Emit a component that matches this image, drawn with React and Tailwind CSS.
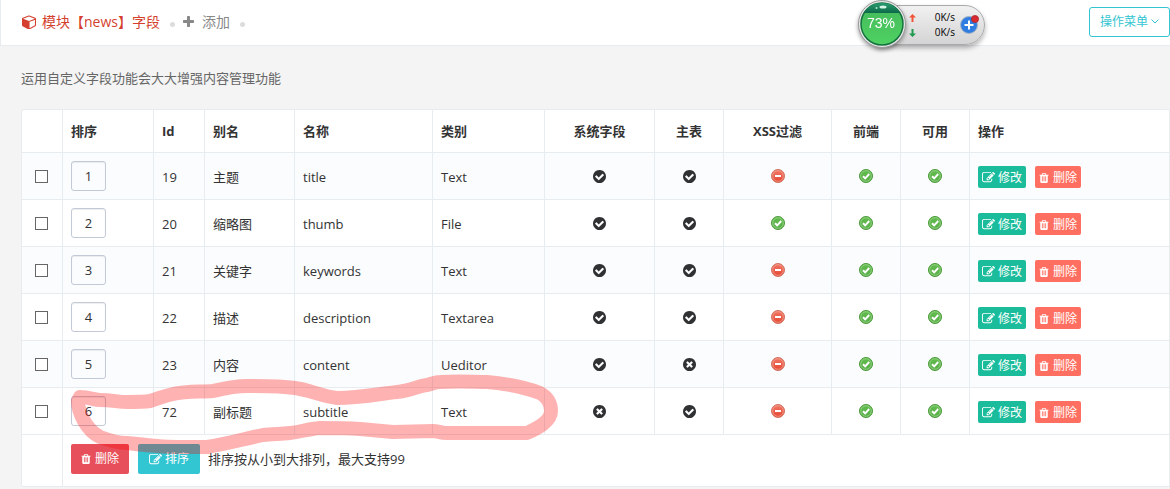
import React from 'react'

const fields = [
  { order: 1, id: 19, alias: '主题', name: 'title', type: 'Text', system: true, main: true, xss: false },
  { order: 2, id: 20, alias: '缩略图', name: 'thumb', type: 'File', system: true, main: true, xss: true },
  { order: 3, id: 21, alias: '关键字', name: 'keywords', type: 'Text', system: true, main: true, xss: false },
  { order: 4, id: 22, alias: '描述', name: 'description', type: 'Textarea', system: true, main: true, xss: false },
  { order: 5, id: 23, alias: '内容', name: 'content', type: 'Ueditor', system: true, main: false, xss: false },
  { order: 6, id: 72, alias: '副标题', name: 'subtitle', type: 'Text', system: false, main: true, xss: false },
]

const paths = {
  cube: 'M896 1629l640-349v-636l-640 233v752zm-64-865l698-254-698-254-698 254zm832-252v768q0 35-18 65t-49 47l-704 384q-28 16-61 16t-61-16l-704-384q-31-17-49-47t-18-65v-768q0-40 23-73t61-47l704-256q22-8 44-8t44 8l704 256q38 14 61 47t23 73z',
  plus: 'M1600 736v192q0 40-28 68t-68 28h-416v416q0 40-28 68t-68 28h-192q-40 0-68-28t-28-68v-416h-416q-40 0-68-28t-28-68v-192q0-40 28-68t68-28h416v-416q0-40 28-68t68-28h192q40 0 68 28t28 68v416h416q40 0 68 28t28 68z',
  edit: 'M888 1184l116-116-152-152-116 116v56h96v96h56zm440-720q-16-16-33 1l-350 350q-17 17-1 33t33-1l350-350q17-17 1-33zm80 594v190q0 119-84.5 203.5t-203.5 84.5h-832q-119 0-203.5-84.5t-84.5-203.5v-832q0-119 84.5-203.5t203.5-84.5h832q63 0 117 25 15 7 18 23 3 17-9 29l-49 49q-14 14-32 8-23-6-45-6h-832q-66 0-113 47t-47 113v832q0 66 47 113t113 47h832q66 0 113-47t47-113v-126q0-13 9-22l64-64q15-15 35-7t20 29zm-96-738l288 288-672 672h-288v-288zm444 132l-92 92-288-288 92-92q28-28 68-28t68 28l152 152q28 28 28 68t-28 68z',
  trash: 'M704 1376v-704q0-14-9-23t-23-9h-64q-14 0-23 9t-9 23v704q0 14 9 23t23 9h64q14 0 23-9t9-23zm256 0v-704q0-14-9-23t-23-9h-64q-14 0-23 9t-9 23v704q0 14 9 23t23 9h64q14 0 23-9t9-23zm256 0v-704q0-14-9-23t-23-9h-64q-14 0-23 9t-9 23v704q0 14 9 23t23 9h64q14 0 23-9t9-23zm-544-992h448l-48-117q-7-9-17-11h-317q-10 2-17 11zm928 32v64q0 14-9 23t-23 9h-96v948q0 83-47 143.5t-113 60.5h-832q-66 0-113-58.5t-47-141.5v-952h-96q-14 0-23-9t-9-23v-64q0-14 9-23t23-9h309l70-167q15-37 54-63t79-26h320q40 0 79 26t54 63l70 167h309q14 0 23 9t9 23z',
  yes: 'M1412 734q0-28-18-46l-91-90q-19-19-45-19t-45 19l-408 407-226-226q-19-19-45-19t-45 19l-91 90q-18 18-18 46 0 27 18 45l362 362q19 19 45 19 27 0 46-19l543-543q18-18 18-45zm252 162q0 209-103 385.5t-279.5 279.5-385.5 103-385.5-103-279.5-279.5-103-385.5 103-385.5 279.5-279.5 385.5-103 385.5 103 279.5 279.5 103 385.5z',
  no: 'M1277 1122q0-26-19-45l-181-181 181-181q19-19 19-45 0-27-19-46l-90-90q-19-19-46-19-26 0-45 19l-181 181-181-181q-19-19-45-19-27 0-46 19l-90 90q-19 19-19 46 0 26 19 45l181 181-181 181q-19 19-19 45 0 27 19 46l90 90q19 19 46 19 26 0 45-19l181-181 181 181q19 19 45 19 27 0 46-19l90-90q19-19 19-46zm387-226q0 209-103 385.5t-279.5 279.5-385.5 103-385.5-103-279.5-279.5-103-385.5 103-385.5 279.5-279.5 385.5-103 385.5 103 279.5 279.5 103 385.5z',
}

function Icon({ name, className, viewBox = '0 0 1792 1792' }) {
  return (
    <svg viewBox={viewBox} fill="currentColor" aria-hidden="true" className={className}>
      <path d={paths[name]} />
    </svg>
  )
}

// dark check / cross
function Flag({ on }) {
  return <Icon name={on ? 'yes' : 'no'} viewBox="128 128 1536 1536" className="mx-auto mt-px size-[13px] text-[#2f3133]" />
}

// glossy green / red toggle
function Toggle({ on, label }) {
  return (
    <button type="button" aria-label={label} className="mx-auto block size-[14px]">
      <svg viewBox="0 0 14 14" className="size-[14px]">
        <circle cx="7" cy="7" r="6.5" fill={on ? 'url(#green)' : 'url(#red)'} stroke={on ? '#4a9a3a' : '#cf7263'} />
        <circle cx="7" cy="7" r="5.3" fill="none" stroke={on ? '#a5d996' : '#f5a898'} strokeWidth="0.7" />
        {on
          ? <path d="M4 7.2L6.2 9.3L10.2 5" fill="none" stroke="#fff" strokeWidth="1.9" />
          : <rect x="4" y="6" width="6" height="2" fill="#fff" />}
      </svg>
    </button>
  )
}

function SpeedBall() {
  return (
    <div className="absolute top-0 left-[856px] h-[50px] w-[130px]">
      <div className="absolute top-[5px] left-[20px] flex h-[40px] w-[109px] items-center rounded-r-full border border-[#aaa] bg-linear-to-b from-[#f1f1f1] to-[#d4d4d4] pl-[32px] font-['Open_Sans','Liberation_Sans',sans-serif] text-[10px] leading-[15px] text-black shadow-[0_3px_5px_rgba(0,0,0,0.3)]">
        <div className="flex w-[46px] flex-col">
          <div className="flex items-center justify-between">
            <svg viewBox="0 0 7 8" className="h-[8px] w-[7px]"><path d="M3.5 0L7 3.5H4.5V8H2.5V3.5H0Z" fill="#f0553a" /></svg>
            <span>0K/s</span>
          </div>
          <div className="flex items-center justify-between">
            <svg viewBox="0 0 7 8" className="h-[8px] w-[7px]"><path d="M3.5 8L7 4.5H4.5V0H2.5V4.5H0Z" fill="#1f9a4f" /></svg>
            <span>0K/s</span>
          </div>
        </div>
        <svg viewBox="0 0 20 20" className="ml-[4px] size-[20px]">
          <circle cx="10" cy="10" r="8.5" fill="#2f7de0" stroke="#a9b4c4" />
          <path d="M10 5.5V14.5M5.5 10H14.5" stroke="#fff" strokeWidth="2" />
          <circle cx="16" cy="4" r="3.6" fill="#d92b2f" stroke="#a32226" strokeWidth="0.7" />
        </svg>
      </div>
      <svg viewBox="0 0 50 50" className="absolute top-0 left-0 size-[50px] drop-shadow-[0_2px_2px_rgba(0,0,0,0.4)]">
        <circle cx="26" cy="24" r="23.5" fill="#e9e9e9" stroke="#9a9a9a" />
        <circle cx="26" cy="24" r="21" fill="url(#ball)" stroke="#14713f" strokeWidth="1.5" />
        <path d="M8 13C12 6 18 3 26 3C34 3 40 6 44 13Z" fill="url(#cap)" />
        <ellipse cx="27" cy="7" rx="3.5" ry="1.5" fill="#d5f5e6" />
        <circle cx="20.5" cy="8" r="1" fill="#b8e6d0" />
        <text x="25" y="28" textAnchor="middle" fontSize="14" fontFamily="Liberation Sans, sans-serif" fill="#fff">73%</text>
      </svg>
    </div>
  )
}

const th = 'border-r border-b border-[#e7ecf1] px-2 text-left font-bold'
const thc = 'border-r border-b border-[#e7ecf1] px-2 text-center font-bold'
const td = 'border-r border-b border-[#e7ecf1] px-2'
const tdText = 'border-r border-b border-[#e7ecf1] px-2 pt-[2px]'

function App() {
  return (
    <div className="relative min-h-screen overflow-hidden bg-[#f4f4f4] font-['Open_Sans','Noto_Sans_CJK_SC',sans-serif] text-[13px] leading-5 text-[#333]">
      <svg className="absolute size-0" aria-hidden="true">
        <defs>
          <linearGradient id="green" x1="0" y1="0" x2="0" y2="1"><stop stopColor="#62bd4e" /><stop offset="1" stopColor="#58ad48" /></linearGradient>
          <linearGradient id="red" x1="0" y1="0" x2="0" y2="1"><stop stopColor="#f27a68" /><stop offset="1" stopColor="#e4442f" /></linearGradient>
          <linearGradient id="ball" x1="0" y1="0" x2="0" y2="1"><stop stopColor="#43b85b" /><stop offset="1" stopColor="#4fd262" /></linearGradient>
          <linearGradient id="cap" x1="0" y1="0" x2="0" y2="1"><stop stopColor="#2b9c70" /><stop offset="1" stopColor="#0c6849" /></linearGradient>
        </defs>
      </svg>

      <header className="flex h-[46px] items-center border-b border-l border-[#e7ecf1] bg-white pb-[2px] pl-[21px] text-[14px]">
        <a href="#fields" className="flex items-center text-[#d43f2e]">
          <Icon name="cube" viewBox="0 64 1664 1664" className="mr-[6px] size-[14px]" />
          模块【news】字段
        </a>
        <span className="mt-[5px] ml-[10px] size-[5px] rounded-full bg-[#ddd]" />
        <a href="#add" className="ml-[8px] flex items-center text-[#888]">
          <Icon name="plus" viewBox="192 128 1408 1408" className="mr-[8px] size-[11px]" />
          添加
        </a>
        <span className="mt-[5px] ml-[10px] size-[5px] rounded-full bg-[#ddd]" />
        <button type="button" className="ml-auto flex h-[30px] items-center rounded-[3px] border border-[#32c5d2] px-[10px] text-[12px] text-[#32c5d2]">
          操作菜单
          <svg viewBox="0 0 8 5" className="ml-[3px] h-[5px] w-[8px]" fill="none" stroke="currentColor"><path d="M0.5 0.5L4 4L7.5 0.5" /></svg>
        </button>
      </header>

      <p className="mt-[22px] ml-[21px] text-[#666]">运用自定义字段功能会大大增强内容管理功能</p>

      <form className="mt-[21px] pl-[21px]">
        <table className="w-full table-fixed border-separate border-spacing-0 rounded-[3px] border-t border-l border-[#e7ecf1] bg-white">
          <colgroup>
            <col className="w-[41px]" />
            <col className="w-[91px]" />
            <col className="w-[51px]" />
            <col className="w-[90px]" />
            <col className="w-[138px]" />
            <col className="w-[112px]" />
            <col className="w-[110px]" />
            <col className="w-[69px]" />
            <col className="w-[108px]" />
            <col className="w-[69px]" />
            <col className="w-[69px]" />
            <col />
          </colgroup>
          <thead>
            <tr className="h-[43px]">
              <th className={th}></th>
              <th className={th}>排序</th>
              <th className={th}>Id</th>
              <th className={th}>别名</th>
              <th className={th}>名称</th>
              <th className={th}>类别</th>
              <th className={thc}>系统字段</th>
              <th className={thc}>主表</th>
              <th className={thc}>XSS过滤</th>
              <th className={thc}>前端</th>
              <th className={thc}>可用</th>
              <th className={th}>操作</th>
            </tr>
          </thead>
          <tbody>
            {fields.map((f) => (
              <tr key={f.id} className="h-[47px] odd:bg-[#fbfcfd]">
                <td className={td}>
                  <input type="checkbox" aria-label={`选择 ${f.name}`} className="mt-px ml-[5px] block size-[13px] appearance-none border border-[#666] bg-white" />
                </td>
                <td className={td}>
                  <input type="text" defaultValue={f.order} aria-label={`排序 ${f.name}`} className="block h-[30px] w-[35px] rounded-[3px] border border-[#c2cad8] text-center shadow-[inset_0_1px_1px_rgba(0,0,0,0.07)]" />
                </td>
                <td className={tdText}>{f.id}</td>
                <td className={tdText}>{f.alias}</td>
                <td className={tdText}>{f.name}</td>
                <td className={tdText}>{f.type}</td>
                <td className={td}><Flag on={f.system} /></td>
                <td className={td}><Flag on={f.main} /></td>
                <td className={td}><Toggle on={f.xss} label="XSS过滤" /></td>
                <td className={td}><Toggle on label="前端" /></td>
                <td className={td}><Toggle on label="可用" /></td>
                <td className={tdText}>
                  <div className="flex gap-[9px] text-[12px] text-white">
                    <a href="#edit" className="flex h-[22px] items-center gap-[3px] rounded-[2px] bg-[#1bbc9b] px-[4px] pt-px">
                      <Icon name="edit" className="size-[13px]" />修改
                    </a>
                    <a href="#delete" className="flex h-[22px] items-center gap-[4px] rounded-[2px] bg-[#ff6f61] px-[4px] pt-px">
                      <Icon name="trash" viewBox="192 128 1408 1536" className="h-[10px] w-[10px]" />删除
                    </a>
                  </div>
                </td>
              </tr>
            ))}
            <tr className="h-[52px]">
              <td className={td}></td>
              <td colSpan={11} className={td}>
                <div className="mb-[4px] flex items-center text-[12px] text-white">
                  <button type="button" className="flex h-[30px] items-center gap-[4px] rounded-[2px] bg-[#e7505a] px-[10px] pt-px">
                    <Icon name="trash" viewBox="192 128 1408 1536" className="h-[10px] w-[10px]" />删除
                  </button>
                  <button type="button" className="ml-[9px] flex h-[30px] items-center gap-[3px] rounded-[2px] bg-[#32c5d2] px-[11px] pt-px">
                    <Icon name="edit" className="size-[13px]" />排序
                  </button>
                  <span className="ml-2 text-[13px] text-[#333]">排序按从小到大排列，最大支持99</span>
                </div>
              </td>
            </tr>
          </tbody>
        </table>
      </form>

      {/* marker loop round the subtitle row */}
      <svg viewBox="0 0 1170 489" className="pointer-events-none absolute top-0 left-0 h-[489px] w-[1170px]" aria-hidden="true">
        <path
          d="M80 397C88 397 94 400 100 400C112 400 118 402 127 402C140 402 144 402 150 401C160 398 164 396 173 394C186 391 200 392 213 391C226 388 234 386 247 386C265 386 280 386 295 388C310 390 324 397 337 398C360 398 378 394 397 392C410 391 418 386 427 385C434 383 436 382 440 382C460 381 474 382 487 382C510 384 524 387 540 393C549 398 551 405 551 411C551 421 538 428 527 433H447C440 433 438 431 433 431L393 432L360 429C346 428 334 428 320 428C308 429 300 432 290 433C280 434 272 434 263 435C244 439 226 444 207 447H177C160 447 144 445 127 443C116 443 108 440 100 437C86 430 78 412 78 401Z"
          fill="none"
          stroke="#f00"
          strokeOpacity="0.3"
          strokeWidth="14"
          strokeLinejoin="round"
        />
      </svg>
      <SpeedBall />
    </div>
  )
}

export default App
